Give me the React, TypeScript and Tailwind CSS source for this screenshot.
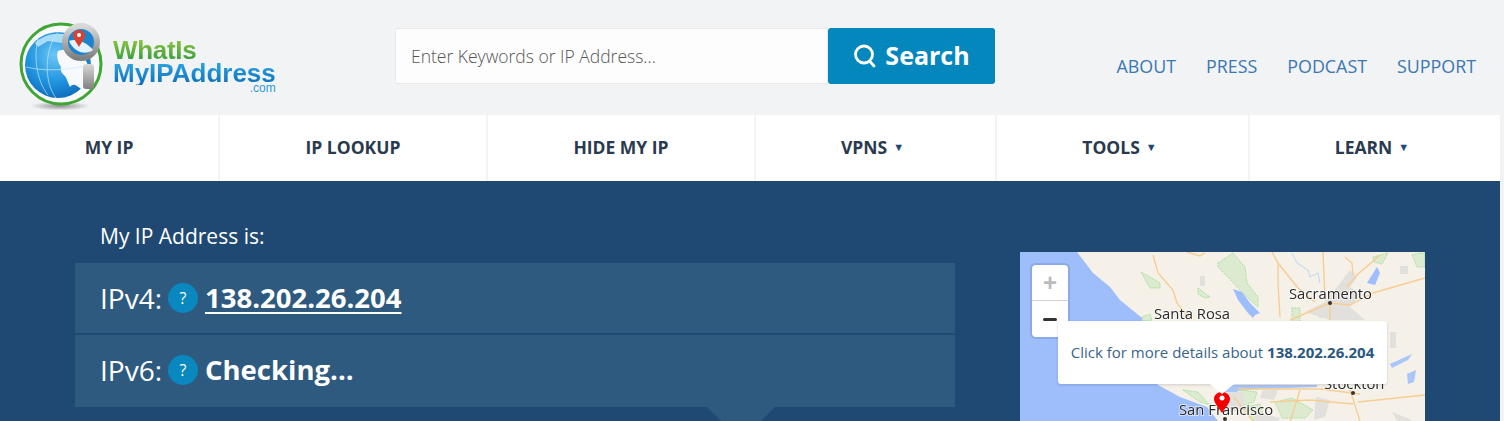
const navItems = [
  { label: "MY IP", width: "w-[218px]" },
  { label: "IP LOOKUP", width: "w-[266px]" },
  { label: "HIDE MY IP", width: "w-[266px]" },
  { label: "VPNS", width: "w-[239px]", caret: true },
  { label: "TOOLS", width: "w-[251px]", caret: true },
  { label: "LEARN", width: "w-[250px]", caret: true },
];

const links = ["ABOUT", "PRESS", "PODCAST", "SUPPORT"];

function Logo() {
  return (
    <div className="flex items-start">
      <svg width="93" height="90" viewBox="0 0 93 90" className="mt-[21px] ml-[18px] shrink-0">
        <defs>
          <radialGradient id="globe" cx="45%" cy="35%" r="75%">
            <stop offset="0%" stopColor="#6cc6f4" />
            <stop offset="55%" stopColor="#1f93df" />
            <stop offset="100%" stopColor="#0a5fb2" />
          </radialGradient>
          <linearGradient id="ring" x1="0" y1="0" x2="0" y2="1">
            <stop offset="0%" stopColor="#d9d9d9" />
            <stop offset="100%" stopColor="#808080" />
          </linearGradient>
          <radialGradient id="shade">
            <stop offset="0%" stopColor="#7d8084" stopOpacity="0.85" />
            <stop offset="100%" stopColor="#7d8084" stopOpacity="0" />
          </radialGradient>
        </defs>
        <ellipse cx="42" cy="85" rx="30" ry="4.500" fill="url(#shade)" />
        <circle cx="43" cy="43" r="40" fill="#f7f9fa" stroke="#3fa535" strokeWidth="3" />
        <circle cx="40" cy="44" r="33" fill="url(#globe)" />
        <path d="M17 22C25 14 38 11 50 14L44 22 30 20 20 26Z" fill="#a9dcf7" />
        <path d="M40 30C46 28 53 28 58 33L66 36 72 48 71 62 63 68C58 64 55 62 52 66 50 62 49 58 47 55 44 52 42 50 43 46 40 42 38 34 40 30Z" fill="#f6fafc" />
        <path d="M8 46C24 50 44 50 72 44M40 11C27 26 25 60 38 77M20 18C15 38 20 62 30 74" fill="none" stroke="#c6e6f9" strokeWidth="0.700" />
        <circle cx="63" cy="21" r="16" fill="#1c83cf" stroke="url(#ring)" strokeWidth="6" />
        <path d="M51 20C59 17 69 22 75 29 67 35 56 31 51 20Z" fill="#e4f2fb" />
        <rect x="65" y="43" width="11" height="25" rx="3" fill="url(#ring)" />
        <path d="M61 9C64.500 9 67 11.500 67 14.500 67 17.500 63 22 61 26 59 22 55 17.500 55 14.500 55 11.500 57.500 9 61 9Z" fill="#d9412f" />
        <circle cx="61" cy="14" r="2" fill="#ffffff" />
      </svg>
      <div className="ml-[2px] mt-[39px] flex flex-col font-['Liberation_Sans',sans-serif] font-bold">
        <span className="h-[23px] bg-gradient-to-b from-[#8cc63f] to-[#2a9a3c] bg-clip-text text-[26px] leading-[23px] tracking-[-0.3px] text-transparent">
          WhatIs
        </span>
        <span className="h-[23px] bg-gradient-to-b from-[#2ea6e2] to-[#0a6fbb] bg-clip-text text-[26px] leading-[23px] text-transparent">
          MyIPAddress
        </span>
        <span className="-mt-[3px] self-end text-[12px] leading-[12px] font-normal text-[#2a9ad8]">.com</span>
      </div>
    </div>
  );
}

function MapPanel() {
  return (
    <div className="relative mt-[71px] ml-[65px] h-[200px] w-[405px] overflow-hidden">
      <svg width="405" height="200" viewBox="0 0 405 200" className="block blur-[0.4px]">
        <rect width="405" height="200" fill="#f5f1e9" />
        {/* water */}
        <path d="M0 0H57L73 21 90 35 100 48 122 66 130 100 138 133 160 145 187 155 198 169 200 200H0Z" fill="#9dbdfb" />
        <path d="M198 169H224L228 176 205 182Z" fill="#9dbdfb" />
        <path d="M205 133H297V135L240 137 218 139 210 150 200 152Z" fill="#a9c6f8" />
        {/* parks */}
        <g fill="#dcead0" stroke="#8fdc83" strokeWidth="0.800" strokeDasharray="1.500 1">
          <path d="M198 11L213 1 225 15 227 31 238 45 238 55 230 48 217 35 208 25 198 15Z" />
          <path d="M130 25L140 31 140 36 130 36 121 20Z" />
          <path d="M178 36L190 45 185 46 178 42Z" />
          <path d="M392 3L400 1H405V15L397 15Z" />
          <path d="M353 5L368 1 362 12 354 10Z" />
          <path d="M296 58L304 53 308 58 300 66Z" />
          <path d="M272 56H280V70H272Z" />
          <path d="M122 65L130 62 132 68 124 69Z" />
          <path d="M163 138L178 140 190 153 180 150Z" />
          <path d="M220 138L237 140 234 150 224 153Z" />
          <path d="M255 150L272 146 293 158 285 166 262 166Z" />
          <path d="M225 155L240 152 245 168 232 168Z" />
        </g>
        {/* lakes */}
        <path d="M213 37L222 40 230 51 240 61 235 63 233 66 228 61 218 48Z" fill="#9dbdfb" />
        <path d="M347 31L357 15 360 21 355 33Z" fill="#9dbdfb" />
        <path d="M370 112L392 102 388 108 372 116Z" fill="#a9c6f8" />
        <path d="M387 122L396 118 394 130 388 132Z" fill="#a9c6f8" />
        {/* urban */}
        <g fill="#e2e0dc">
          <path d="M317 35L330 18 337 25 330 35 342 42 330 55 345 68 310 68 285 60 305 50Z" />
          <path d="M196 140L222 140 226 158 205 160Z" />
          <path d="M243 138L258 138 254 148 240 146Z" />
          <path d="M236 160L260 166 252 180 232 178Z" />
          <path d="M296 145L310 148 305 165 294 168Z" />
          <path d="M372 160L392 168 380 174Z" />
          <rect x="370" y="80" width="6" height="16" />
          <rect x="180" y="24" width="5" height="10" />
          <rect x="380" y="14" width="8" height="8" />
        </g>
        {/* roads */}
        <g fill="none" stroke="#f8cd92" strokeWidth="1.400">
          <path d="M252 0L258 11 278 36 295 50" />
          <path d="M258 11V31L260 65" />
          <path d="M303 0L305 48" />
          <path d="M325 5L332 11 333 23" />
          <path d="M360 3L337 23 327 35" />
          <path d="M310 51L270 68" />
          <path d="M310 51V68" />
          <path d="M310 51L330 53 353 41 405 26" />
          <path d="M133 3L138 21 153 38 157 51 170 68" />
          <path d="M167 0L180 4 185 1" />
          <path d="M218 137L300 137 340 142" />
          <path d="M214 145L240 178" />
          <path d="M250 150L290 148 333 152" />
          <path d="M330 138L340 169" />
          <path d="M338 150L405 143" />
          <path d="M280 138L270 170" />
        </g>
        <path d="M272 1L277 11 288 18 290 25 298 21 300 31" fill="none" stroke="#a9d0f4" strokeWidth="0.800" />
        {/* labels */}
        <g fill="#2b2b2b" fontFamily="'Open Sans', sans-serif" fontSize="14.800" stroke="#ffffff" strokeOpacity="0.6" strokeWidth="2" paintOrder="stroke">
          <text x="134" y="67">Santa Rosa</text>
          <text x="269" y="47">Sacramento</text>
          <text x="304" y="137">Stockton</text>
          <text x="159" y="163">San Francisco</text>
        </g>
        <circle cx="310" cy="51" r="2" fill="#333333" />
        <circle cx="333" cy="141" r="2" fill="#333333" />
        <circle cx="205" cy="167" r="2" fill="#333333" />
        <path d="M202 140C206.500 140 210 143 210 147 210 151 205 156 202 161 199 156 194 151 194 147 194 143 197.500 140 202 140Z" fill="#f40000" />
        <circle cx="202" cy="146" r="2.500" fill="#ffffff" />
      </svg>
      {/* zoom buttons */}
      <div className="absolute top-[13px] left-[12px] flex h-[72px] w-[36px] flex-col rounded-[4px] bg-white shadow-[0_0_0_2px_rgba(90,110,160,0.25)]">
        <div className="flex h-[36px] items-center justify-center border-b border-[#d4d4d4] font-['Liberation_Sans',sans-serif] text-[24px] font-bold text-[#bbbbbb]">+</div>
        <div className="flex flex-1 items-center justify-center">
          <span className="h-[3px] w-[14px] rounded-full bg-[#333333]" />
        </div>
      </div>
      {/* marker popup */}
      <div className="absolute top-[69px] left-[38px] flex h-[63px] w-[329px] items-center justify-center rounded-[3px] bg-white text-[15px] text-[#3b6488] shadow-[0_1px_3px_rgba(0,0,0,0.15)]">
        <span>Click for more details about <strong className="font-bold text-[#2a5880]">138.202.26.204</strong></span>
        <span className="absolute top-full left-[152px] h-0 w-0 border-x-[12px] border-t-[10px] border-x-transparent border-t-white" />
      </div>
    </div>
  );
}

function IpRow({ label, tall, children }: { label: string; tall?: boolean; children: React.ReactNode }) {
  return (
    <div className={`flex items-center bg-[#2e5a80] pl-[25px] text-white ${tall ? "h-[72px] pb-[2px]" : "h-[70px]"}`}>
      <span className="text-[28px]">{label}</span>
      <span className="mr-[7px] ml-[6px] flex h-[30px] w-[30px] items-center justify-center rounded-full bg-[#0987bf] text-[16px]">?</span>
      {children}
    </div>
  );
}

export default function App() {
  return (
    <div className="h-[421px] w-[1504px] overflow-hidden bg-[#f2f3f5] font-['Open_Sans',sans-serif]">
      <header className="flex h-[115px]">
        <div className="w-[395px] shrink-0">
          <Logo />
        </div>
        <div className="mt-[28px] flex h-[56px]">
          <div className="flex w-[433px] items-center rounded-l-[3px] border border-[#e8e8e8] bg-[#fdfdfd] pl-[15px] text-[17.500px] font-light text-[#555555]">
            Enter Keywords or IP Address...
          </div>
          <button className="flex w-[167px] items-center justify-center gap-[8px] rounded-[3px] bg-[#0487bd] text-[25px] font-bold text-white">
            <svg width="24" height="24" viewBox="0 0 24 24" fill="none" stroke="currentColor" strokeWidth="2.800" strokeLinecap="round">
              <circle cx="11" cy="10.500" r="8.500" />
              <path d="M16.500 17L21 22" />
            </svg>
            Search
          </button>
        </div>
        <nav className="mt-[54px] ml-auto flex h-[24px] items-center gap-[30px] pr-[28px] text-[17.850px] text-[#3a78b4]">
          {links.map((link) => (
            <a key={link}>{link}</a>
          ))}
        </nav>
      </header>

      <nav className="flex h-[66px] w-[1500px] gap-[2px]">
        {navItems.map((item) => (
          <div key={item.label} className={`flex items-center justify-center bg-white pb-[2px] text-[17.500px] font-bold text-[#2a3a4e] ${item.width} ${item.caret ? "pr-[6px]" : ""}`}>
            {item.label}
            {item.caret && <span className="ml-[6px] text-[11px] text-[#1f4a75]">▼</span>}
          </div>
        ))}
      </nav>

      <main className="flex h-[240px] w-[1500px] bg-[#1f4972]">
        <section className="ml-[75px] w-[880px] shrink-0 pt-[42px]">
          <p className="h-[40px] pl-[25px] text-[21px] leading-[26px] text-white">My IP Address is:</p>
          <div className="relative flex flex-col gap-[2px]">
            <IpRow label="IPv4:">
              <a className="text-[27.500px] font-bold underline underline-offset-[4px]">138.202.26.204</a>
            </IpRow>
            <IpRow label="IPv6:" tall>
              <span className="text-[27.500px] font-bold">Checking...</span>
            </IpRow>
            <span className="absolute top-full left-[632px] h-0 w-0 border-x-[34px] border-t-[34px] border-x-transparent border-t-[#2e5a80]" />
          </div>
        </section>
        <MapPanel />
      </main>
    </div>
  );
}
